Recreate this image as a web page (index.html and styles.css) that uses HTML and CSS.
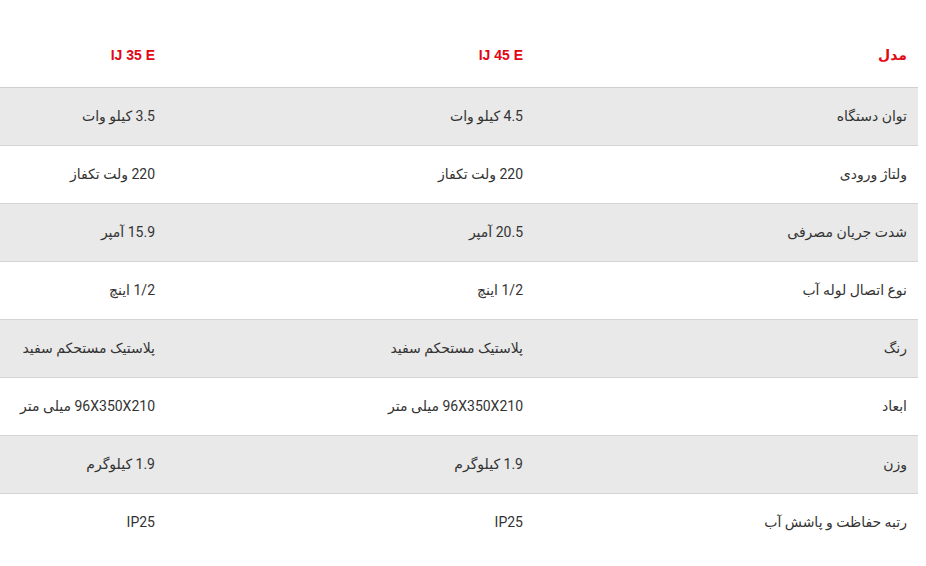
FILE: index.html
```html
<!DOCTYPE html>
<html lang="fa" dir="rtl">
<head>
<meta charset="utf-8">
<link rel="stylesheet" href="styles.css">
</head>
<body>
<table class="spec">
  <thead>
    <tr class="head">
      <th class="c1">مدل</th>
      <th class="c2">IJ 45 E</th>
      <th class="c3">IJ 35 E</th>
    </tr>
  </thead>
  <tbody>
    <tr class="alt"><td>توان دستگاه</td><td>4.5 کیلو وات</td><td>3.5 کیلو وات</td></tr>
    <tr><td>ولتاژ ورودی</td><td>220 ولت تکفاز</td><td>220 ولت تکفاز</td></tr>
    <tr class="alt"><td>شدت جریان مصرفی</td><td>20.5 آمپر</td><td>15.9 آمپر</td></tr>
    <tr><td>نوع اتصال لوله آب</td><td>1/2 اینچ</td><td>1/2 اینچ</td></tr>
    <tr class="alt"><td>رنگ</td><td>پلاستیک مستحکم سفید</td><td>پلاستیک مستحکم سفید</td></tr>
    <tr><td>ابعاد</td><td>96X350X210 میلی متر</td><td>96X350X210 میلی متر</td></tr>
    <tr class="alt"><td>وزن</td><td>1.9 کیلوگرم</td><td>1.9 کیلوگرم</td></tr>
    <tr class="last"><td>رتبه حفاظت و پاشش آب</td><td>IP25</td><td>IP25</td></tr>
  </tbody>
</table>
</body>
</html>
```
FILE: styles.css
```css
html, body {
  margin: 0;
  padding: 0;
  background: #ffffff;
}
body {
  padding-top: 25px;
  font-family: Roboto, "DejaVu Sans", sans-serif;
  direction: rtl;
}
.spec {
  width: 917px;
  margin: 0 auto 0 0;
  border-collapse: collapse;
  table-layout: fixed;
  font-size: 14px;
  color: #333333;
}
.spec th, .spec td {
  text-align: right;
  padding: 0 11px 1px 0;
  vertical-align: middle;
  font-weight: normal;
}
.spec .c1 { width: 373px; }
.spec .c2 { width: 357px; }
.spec .c3 { width: 155px; }
.head th {
  height: 60px;
  color: #e30613;
  font-weight: bold;
  font-size: 14px;
  font-family: "Liberation Sans", "DejaVu Sans", sans-serif;
  border-bottom: 1px solid #cfcfcf;
  padding-top: 0;
  padding-bottom: 2px;
}
.spec tbody tr td {
  height: 56px;
  border-bottom: 1px solid #d4d4d4;
}
.spec tbody tr.last td {
  border-bottom: none;
}
.spec tr.alt td {
  background: #e9e9e9;
}
```
